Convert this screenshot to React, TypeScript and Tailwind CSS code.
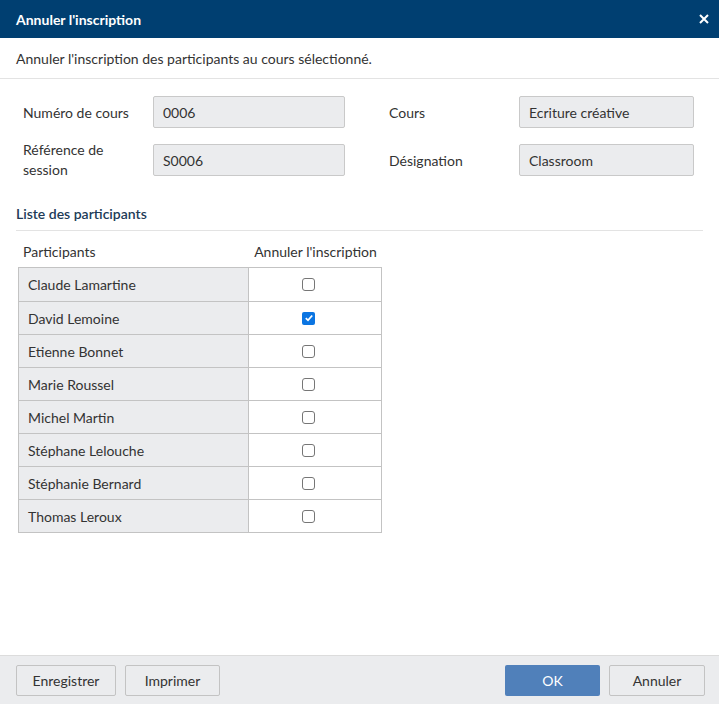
import React from 'react';

const participants = [
  { name: 'Claude Lamartine', checked: false },
  { name: 'David Lemoine', checked: true },
  { name: 'Etienne Bonnet', checked: false },
  { name: 'Marie Roussel', checked: false },
  { name: 'Michel Martin', checked: false },
  { name: 'Stéphane Lelouche', checked: false },
  { name: 'Stéphanie Bernard', checked: false },
  { name: 'Thomas Leroux', checked: false },
];

function Field({ value }: { value: string }) {
  return (
    <div className="h-[32px] rounded-[2px] border border-[#c9c9c9] bg-[#ebecee] px-[9px] flex items-center text-[14px] text-[#333]">
      {value}
    </div>
  );
}

function CheckBox({ checked }: { checked: boolean }) {
  if (checked) {
    return (
      <span className="w-[13px] h-[13px] rounded-[2px] bg-[#0b75e2] flex items-center justify-center">
        <svg width="10" height="10" viewBox="0 0 10 10">
          <path d="M1.8 5.2 L4 7.3 L8.2 2.5" fill="none" stroke="white" strokeWidth="1.8" />
        </svg>
      </span>
    );
  }
  return <span className="w-[13px] h-[13px] rounded-[3px] border border-[#767676] bg-white" />;
}

export default function App() {
  return (
    <div
      className="w-[719px] h-[704px] bg-white flex flex-col text-[#333]"
      style={{ fontFamily: 'Lato, "Open Sans", sans-serif' }}
    >
      <div className="h-[38px] bg-[#003f71] flex items-center justify-between pl-[16px] pr-[10px] shrink-0">
        <span className="text-white text-[14px] font-bold">Annuler l'inscription</span>
        <svg width="10" height="10" viewBox="0 0 10 10">
          <path d="M1 1 L9 9 M9 1 L1 9" stroke="white" strokeWidth="2" />
        </svg>
      </div>

      <div className="h-[41px] border-b border-[#e3e3e3] px-[16px] flex items-center text-[14px] shrink-0">
        Annuler l'inscription des participants au cours sélectionné.
      </div>

      <div className="flex-1 px-[16px]">
        <div className="grid grid-cols-[130px_192px_174px_175px] gap-y-[12px] pt-[17px] pl-[7px]">
          <div className="flex items-center text-[14px]">Numéro de cours</div>
          <Field value="0006" />
          <div className="flex items-center text-[14px] pl-[44px]">Cours</div>
          <Field value="Ecriture créative" />
          <div className="flex items-center text-[14px] leading-[20px]">
            Référence de
            <br />
            session
          </div>
          <div className="flex items-center">
            <div className="w-full">
              <Field value="S0006" />
            </div>
          </div>
          <div className="flex items-center text-[14px] pl-[44px]">Désignation</div>
          <div className="flex items-center">
            <div className="w-full">
              <Field value="Classroom" />
            </div>
          </div>
        </div>

        <div className="mt-[24px] pb-[6px] border-b border-[#e3e3e3] text-[14px] leading-[20px] font-semibold text-[#203a57]">
          Liste des participants
        </div>

        <div className="mt-[5px] ml-[2px] w-[364px]">
          <div className="flex h-[31px] items-center text-[14px]">
            <div className="w-[231px] pl-[5px]">Participants</div>
            <div className="flex-1 text-center">Annuler l'inscription</div>
          </div>
          <div className="border border-[#c3c3c3]">
            {participants.map((p, i) => (
              <div
                key={p.name}
                className={`flex h-[33px] ${i > 0 ? 'border-t border-[#c3c3c3]' : ''}`}
              >
                <div className="w-[230px] bg-[#ebecee] border-r border-[#c3c3c3] pl-[9px] flex items-center text-[14px]">
                  {p.name}
                </div>
                <div className="flex-1 flex items-center justify-center pr-[13px]">
                  <CheckBox checked={p.checked} />
                </div>
              </div>
            ))}
          </div>
        </div>
      </div>

      <div className="h-[49px] bg-[#ebecee] border-t border-[#dcdcdc] flex items-center justify-between pl-[16px] pr-[14px] shrink-0">
        <div className="flex gap-[9px]">
          <button className="h-[31px] w-[100px] rounded-[2px] border border-[#c3c3c3] bg-[#ebecee] text-[14px] text-[#333]">
            Enregistrer
          </button>
          <button className="h-[31px] w-[95px] rounded-[2px] border border-[#c3c3c3] bg-[#ebecee] text-[14px] text-[#333]">
            Imprimer
          </button>
        </div>
        <div className="flex gap-[9px]">
          <button className="h-[31px] w-[95px] rounded-[2px] bg-[#5080ba] text-[14px] text-white">OK</button>
          <button className="h-[31px] w-[96px] rounded-[2px] border border-[#c3c3c3] bg-[#ebecee] text-[14px] text-[#333]">
            Annuler
          </button>
        </div>
      </div>
    </div>
  );
}
